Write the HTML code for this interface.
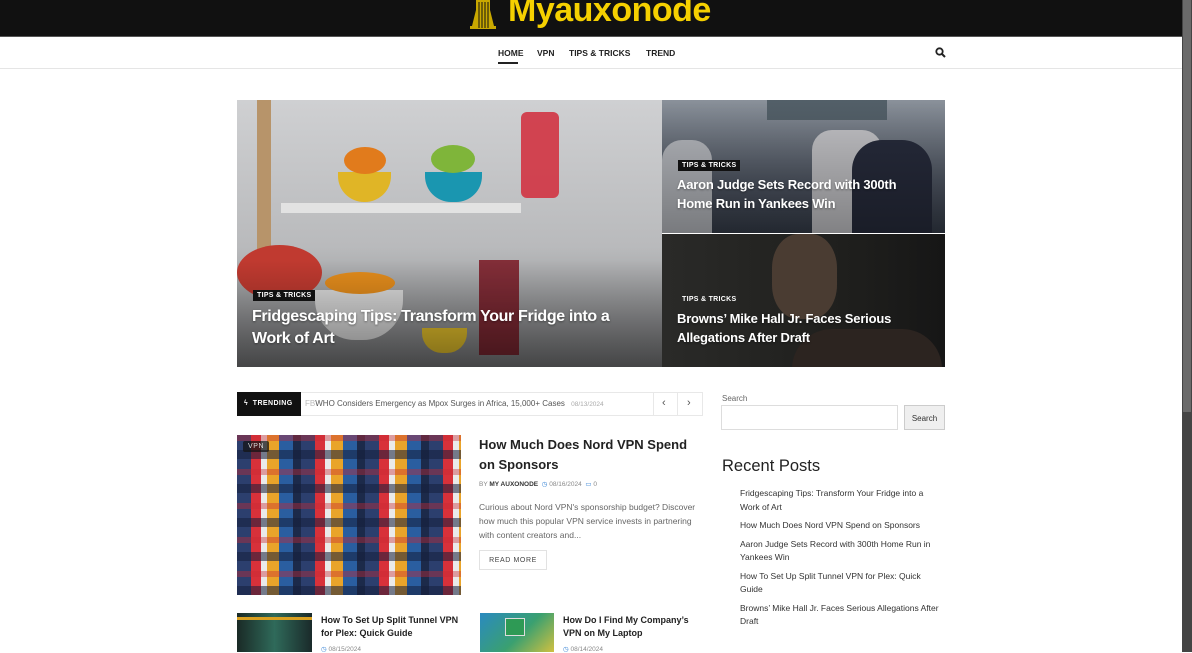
<!DOCTYPE html>
<html><head><meta charset="utf-8"><style>
*{margin:0;padding:0;box-sizing:border-box}
body{width:1192px;height:652px;overflow:hidden;background:#fff;font-family:"Liberation Sans",Arial,sans-serif;position:relative;color:#111}
.abs{position:absolute}
.top{left:0;top:0;width:1182px;height:37px;background:#111;border-bottom:1px solid #555}
.logo{left:508px;top:-9px;font-size:34px;color:#f5d000;font-weight:bold;letter-spacing:-0.5px}
.nav{left:0;top:38px;width:1182px;height:31px;border-bottom:1px solid #e5e5e5}
.nav span{position:absolute;top:10px;font-size:8.5px;font-weight:bold;color:#222}
.sb{left:1182px;top:0;width:10px;height:652px;background:#444}
.thumb{left:1183px;top:0;width:8px;height:412px;background:#6a6a6a}
.tag{background:#111;color:#fff;font-size:7px;font-weight:bold;padding:2px 4px;letter-spacing:.3px}
.ht{color:#fff;font-weight:bold;text-shadow:0 1px 2px rgba(0,0,0,.4)}
.side li{list-style:none;font-size:8.5px;line-height:13.5px;color:#333;margin-bottom:5px}
</style></head><body>
<div class="abs top"></div>
<svg class="abs" style="left:468px;top:0" width="30" height="30" viewBox="0 0 30 30"><path d="M8 0h14v10l4 16h2v3H2v-3h2l4-16z" fill="#c9a800"/><path d="M11 2v26M14 2v26M17 2v26M20 2v26" stroke="#111" stroke-width="1"/></svg>
<div class="abs logo">Myauxonode</div>
<div class="abs nav">
<span style="left:498px">HOME</span><div class="abs" style="left:498px;top:24px;width:20px;height:2px;background:#222"></div>
<span style="left:537px">VPN</span><span style="left:569px">TIPS &amp; TRICKS</span><span style="left:646px">TREND</span>
<svg class="abs" style="left:935px;top:9px" width="11" height="11" viewBox="0 0 11 11"><circle cx="4.5" cy="4.5" r="3.2" stroke="#222" stroke-width="1.8" fill="none"/><path d="M7 7l3 3" stroke="#222" stroke-width="2"/></svg>
</div>
<div class="abs sb"></div><div class="abs thumb"></div>

<div class="abs" style="left:237px;top:100px;width:425px;height:267px;background:linear-gradient(180deg,#cfd0d2 0%,#b9babc 55%,#7d7e80 100%);overflow:hidden">
<div class="abs" style="left:20px;top:0;width:14px;height:160px;background:#b7946a"></div>
<div class="abs" style="left:44px;top:103px;width:240px;height:10px;background:#e2e2e2"></div>
<div class="abs" style="left:101px;top:72px;width:53px;height:30px;border-radius:0 0 26px 26px;background:#e0b526"></div>
<div class="abs" style="left:107px;top:47px;width:42px;height:27px;border-radius:50%;background:#e17b1c"></div>
<div class="abs" style="left:188px;top:72px;width:57px;height:30px;border-radius:0 0 26px 26px;background:#1a96b0"></div>
<div class="abs" style="left:194px;top:45px;width:44px;height:28px;border-radius:50%;background:#7fb53a"></div>
<div class="abs" style="left:284px;top:12px;width:38px;height:86px;border-radius:6px;background:#d13443;opacity:.9"></div>
<div class="abs" style="left:0;top:145px;width:85px;height:55px;border-radius:50%;background:#c03a30"></div>
<div class="abs" style="left:78px;top:190px;width:88px;height:50px;border-radius:0 0 40px 40px;background:#ddd"></div>
<div class="abs" style="left:88px;top:172px;width:70px;height:22px;border-radius:50%;background:#e58d1c"></div>
<div class="abs" style="left:242px;top:160px;width:40px;height:95px;background:#7a1622;opacity:.85"></div>
<div class="abs" style="left:185px;top:228px;width:45px;height:25px;border-radius:0 0 20px 20px;background:#e6c22c"></div>
<div class="abs" style="left:0;top:160px;width:425px;height:107px;background:linear-gradient(180deg,rgba(0,0,0,0),rgba(0,0,0,.45))"></div>
<span class="abs tag" style="left:16px;top:190px">TIPS &amp; TRICKS</span>
<div class="abs ht" style="left:15px;top:206px;width:390px;font-size:16px;line-height:22px;letter-spacing:-0.35px">Fridgescaping Tips: Transform Your Fridge into a Work of Art</div>
</div>
<div class="abs" style="left:662px;top:100px;width:283px;height:133px;background:linear-gradient(180deg,#9aa2ac,#5a6270 60%,#3a4250);overflow:hidden">
<div class="abs" style="left:105px;top:0;width:120px;height:20px;background:#5c6a74"></div>
<div class="abs" style="left:150px;top:30px;width:70px;height:103px;background:#d8d8dc;border-radius:20px 20px 0 0"></div>
<div class="abs" style="left:0;top:40px;width:50px;height:93px;background:#c9ccd2;border-radius:20px 20px 0 0"></div>
<div class="abs" style="left:190px;top:40px;width:80px;height:93px;background:#2b3042;border-radius:30px 30px 0 0"></div>
<div class="abs" style="left:0;top:0;width:283px;height:133px;background:linear-gradient(180deg,rgba(0,0,0,.1),rgba(0,0,0,.4))"></div>
<span class="abs tag" style="left:16px;top:60px">TIPS &amp; TRICKS</span>
<div class="abs ht" style="left:15px;top:76px;width:235px;font-size:13px;line-height:18.5px;letter-spacing:-0.2px">Aaron Judge Sets Record with 300th Home Run in Yankees Win</div>
</div>
<div class="abs" style="left:662px;top:234px;width:283px;height:133px;background:linear-gradient(90deg,#2a2a28,#1e1e1c 70%,#161616);overflow:hidden">
<div class="abs" style="left:110px;top:0;width:65px;height:85px;border-radius:40%;background:#4a3c32"></div>
<div class="abs" style="left:130px;top:95px;width:150px;height:60px;border-radius:40px 40px 0 0;background:#2c2420"></div>
<span class="abs tag" style="left:16px;top:60px;background:transparent">TIPS &amp; TRICKS</span>
<div class="abs ht" style="left:15px;top:76px;width:235px;font-size:13px;line-height:18.5px;letter-spacing:-0.2px">Browns’ Mike Hall Jr. Faces Serious Allegations After Draft</div>
</div>

<div class="abs" style="left:237px;top:392px;width:466px;height:24px;border:1px solid #e8e8e8"></div>
<div class="abs" style="left:237px;top:392px;width:64px;height:24px;background:#111;color:#fff;font-size:7px;font-weight:bold;padding:8px 0 0 7px;letter-spacing:.4px">ϟ&nbsp; TRENDING</div>
<div class="abs" style="left:305px;top:399px;font-size:8px;color:#555"><span style="color:#bbb">FB</span>WHO Considers Emergency as Mpox Surges in Africa, 15,000+ Cases <span style="color:#aaa;font-size:6.5px;margin-left:4px">08/13/2024</span></div>
<div class="abs" style="left:653px;top:392px;width:1px;height:24px;background:#e8e8e8"></div>
<div class="abs" style="left:677px;top:392px;width:1px;height:24px;background:#e8e8e8"></div>
<div class="abs" style="left:662px;top:397px;font-size:11px;color:#555">‹</div>
<div class="abs" style="left:687px;top:397px;font-size:11px;color:#555">›</div>

<div class="abs" style="left:237px;top:435px;width:224px;height:160px;overflow:hidden;background:repeating-linear-gradient(90deg,#2c3f6e 0 14px,#d8313a 14px 24px,#eaeaea 24px 30px,#e9a42a 30px 42px,#2a5ea0 42px 56px,#1c2a4a 56px 64px)">
<div style="position:absolute;inset:0;background:repeating-linear-gradient(0deg,rgba(20,30,60,.55) 0 9px,rgba(255,255,255,0) 9px 18px,rgba(200,40,50,.4) 18px 24px,rgba(0,0,0,0) 24px 34px)"></div>
<span class="abs" style="left:6px;top:6px;background:rgba(20,20,20,.75);color:#ddd;font-size:7px;padding:2px 5px;border-radius:2px;letter-spacing:.6px">VPN</span>
</div>
<div class="abs" style="left:479px;top:435px;width:225px;font-size:13px;font-weight:bold;line-height:20px;color:#222">How Much Does Nord VPN Spend on Sponsors</div>
<div class="abs" style="left:479px;top:480px;font-size:6.5px;color:#888">BY <b style="color:#333">MY AUXONODE</b> &nbsp;<span style="color:#3b86d6">◷</span> 08/16/2024 &nbsp;<span style="color:#3b86d6">▭</span> 0</div>
<div class="abs" style="left:479px;top:500px;width:228px;font-size:8.5px;line-height:14px;color:#666">Curious about Nord VPN's sponsorship budget? Discover how much this popular VPN service invests in partnering with content creators and...</div>
<div class="abs" style="left:479px;top:550px;width:68px;height:20px;border:1px solid #e2e2e2;font-size:7px;color:#444;text-align:center;padding-top:6px;letter-spacing:.6px">READ MORE</div>

<div class="abs" style="left:237px;top:613px;width:75px;height:39px;background:linear-gradient(90deg,#1a2a26,#2f6a5a 50%,#1a2a2a);"><div class="abs" style="left:0;top:4px;width:75px;height:3px;background:#d9a020"></div></div>
<div class="abs" style="left:321px;top:614px;width:140px;font-size:9px;font-weight:bold;line-height:13px;color:#222">How To Set Up Split Tunnel VPN for Plex: Quick Guide</div>
<div class="abs" style="left:321px;top:645px;font-size:6.5px;color:#888"><span style="color:#3b86d6">◷</span> 08/15/2024</div>
<div class="abs" style="left:480px;top:613px;width:74px;height:39px;background:linear-gradient(135deg,#2a8ac0,#3aa070 55%,#d0c040)"><div class="abs" style="left:25px;top:5px;width:20px;height:18px;background:#2e9a55;border:1px solid #ddd"></div></div>
<div class="abs" style="left:563px;top:614px;width:140px;font-size:9px;font-weight:bold;line-height:13px;color:#222">How Do I Find My Company’s VPN on My Laptop</div>
<div class="abs" style="left:563px;top:645px;font-size:6.5px;color:#888"><span style="color:#3b86d6">◷</span> 08/14/2024</div>

<div class="abs" style="left:722px;top:394px;font-size:8px;color:#666">Search</div>
<div class="abs" style="left:721px;top:405px;width:177px;height:25px;border:1px solid #ddd"></div>
<div class="abs" style="left:904px;top:405px;width:41px;height:25px;border:1px solid #ccc;background:#efefef;font-size:8px;color:#333;text-align:center;padding-top:8px">Search</div>
<div class="abs" style="left:722px;top:457px;font-size:16.5px;color:#222">Recent Posts</div>
<ul class="abs side" style="left:740px;top:487px;width:200px">
<li>Fridgescaping Tips: Transform Your Fridge into a Work of Art</li>
<li>How Much Does Nord VPN Spend on Sponsors</li>
<li>Aaron Judge Sets Record with 300th Home Run in Yankees Win</li>
<li>How To Set Up Split Tunnel VPN for Plex: Quick Guide</li>
<li>Browns’ Mike Hall Jr. Faces Serious Allegations After Draft</li>
</ul>
</body></html>
